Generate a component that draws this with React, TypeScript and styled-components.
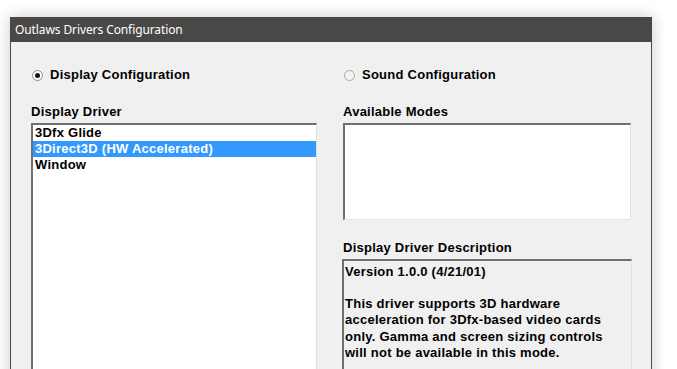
import * as React from 'react'
import styled, { createGlobalStyle } from 'styled-components'

const GlobalStyle = createGlobalStyle`
  html, body {
    margin: 0;
    padding: 0;
    background: #ffffff;
    overflow: hidden;
  }
`

const Page = styled.div`
  width: 677px;
  height: 369px;
  padding: 17px 0 0 10px;
  box-sizing: border-box;
  overflow: hidden;
`

const Window = styled.div`
  width: 642px;
  height: 420px;
  box-sizing: border-box;
  border: 1px solid #4f4d4b;
  border-top: none;
  background: #f0f0f0;
  box-shadow: 0 0 14px rgba(0, 0, 0, 0.22);
  display: flex;
  flex-direction: column;
`

const TitleBar = styled.div`
  height: 25px;
  margin: 0 -1px;
  padding-left: 5px;
  background: #4a4846;
  color: #ffffff;
  font-family: 'Noto Sans', 'Open Sans', sans-serif;
  font-size: 12px;
  line-height: 25px;
  letter-spacing: -0.1px;
`

const Body = styled.div`
  display: grid;
  grid-template-columns: 286px 289px;
  column-gap: 26px;
  padding: 25px 0 0 20px;
  font-family: 'Liberation Sans', Arial, sans-serif;
  font-weight: bold;
  font-size: 13px;
  letter-spacing: 0.25px;
  color: #000000;
`

const Column = styled.div`
  display: flex;
  flex-direction: column;
`

const RadioRow = styled.label`
  display: flex;
  align-items: center;
  gap: 7px;
  height: 16px;
  line-height: 16px;
  padding-left: 1px;
`

const RadioDot = styled.span<{ $checked?: boolean }>`
  width: 11px;
  height: 11px;
  border-radius: 50%;
  box-sizing: border-box;
  border: 1px solid ${p => (p.$checked ? '#8a8a8a' : '#a8a8a8')};
  background: ${p => (p.$checked ? '#ffffff' : '#f4f4f4')};
  display: flex;
  align-items: center;
  justify-content: center;

  &::after {
    content: '';
    width: 5px;
    height: 5px;
    border-radius: 50%;
    background: ${p => (p.$checked ? '#111111' : 'transparent')};
  }
`

const FieldLabel = styled.div<{ $top: number }>`
  margin-top: ${p => p.$top}px;
  height: 16px;
  line-height: 16px;
`

const Sunken = styled.div`
  box-sizing: border-box;
  border-style: solid;
  border-width: 2px 1px 1px 2px;
  border-color: #6f6f6f #e3e3e3 #e3e3e3 #6f6f6f;
  margin-top: 3px;
`

const ListBox = styled(Sunken)`
  height: 260px;
  background: #ffffff;
`

const ListItem = styled.div<{ $selected?: boolean }>`
  height: 16px;
  line-height: 16px;
  padding-left: 2px;
  white-space: nowrap;
  background: ${p => (p.$selected ? '#3399ff' : 'transparent')};
  color: ${p => (p.$selected ? '#ffffff' : '#000000')};
`

const ModesBox = styled(Sunken)`
  height: 97px;
  width: 288px;
  background: #ffffff;
`

const DescriptionBox = styled(Sunken)`
  height: 200px;
  width: 290px;
  margin-left: -1px;
  background: #f0f0f0;
  padding: 3px 0 0 1px;
  line-height: 16.2px;
`

const Paragraph = styled.p`
  margin: 0 0 16px;
`

const drivers = ['3Dfx Glide', '3Direct3D (HW Accelerated)', 'Window']

const description = [
  'This driver supports 3D hardware',
  'acceleration for 3Dfx-based video cards',
  'only. Gamma and screen sizing controls',
  'will not be available in this mode.',
]

export default function App() {
  return (
    <>
      <GlobalStyle />
      <Page>
        <Window>
          <TitleBar>Outlaws Drivers Configuration</TitleBar>
          <Body>
            <Column>
              <RadioRow>
                <RadioDot $checked />
                Display Configuration
              </RadioRow>
              <FieldLabel $top={21}>Display Driver</FieldLabel>
              <ListBox>
                {drivers.map((d, i) => (
                  <ListItem key={d} $selected={i === 1}>
                    {d}
                  </ListItem>
                ))}
              </ListBox>
            </Column>
            <Column>
              <RadioRow>
                <RadioDot />
                Sound Configuration
              </RadioRow>
              <FieldLabel $top={21}>Available Modes</FieldLabel>
              <ModesBox />
              <FieldLabel $top={20}>Display Driver Description</FieldLabel>
              <DescriptionBox>
                <Paragraph>Version 1.0.0 (4/21/01)</Paragraph>
                <Paragraph>
                  {description.map((line, i) => (
                    <React.Fragment key={i}>
                      {line}
                      <br />
                    </React.Fragment>
                  ))}
                </Paragraph>
              </DescriptionBox>
            </Column>
          </Body>
        </Window>
      </Page>
    </>
  )
}
